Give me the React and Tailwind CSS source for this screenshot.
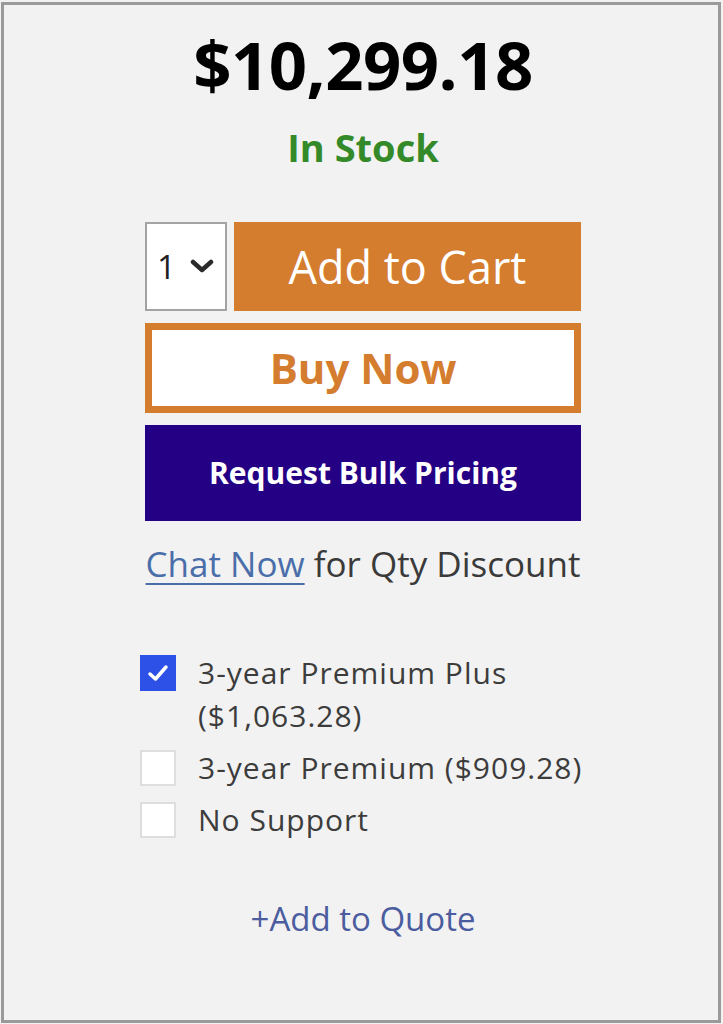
export default function App() {
  const font = { fontFamily: '"Open Sans", "Liberation Sans", sans-serif' };
  return (
    <div className="w-[723px] h-[1024px] bg-[#f2f2f2] pt-[2px] pl-[1px]" style={font}>
      <div className="w-[720px] h-[1021px] border-[3px] border-[#9a9a9a] bg-[#f2f2f2] flex flex-col">
        <div className="w-[436px] ml-[141px] flex flex-col pt-[26px]">
          <div className="text-center text-[67px] leading-[66px] font-bold text-black tracking-[-0.5px]">
            $10,299.18
          </div>
          <div className="mt-[30px] text-center text-[38px] leading-[40px] font-bold text-[#348a29]">
            In Stock
          </div>
          <div className="mt-[55px] flex gap-[7px] h-[89px]">
            <div className="w-[82px] h-full bg-white border-2 border-[#a3a3a3] flex items-center pl-[10px] gap-[14px]">
              <span className="text-[33px] leading-none text-[#222]">1</span>
              <svg width="24" height="15" viewBox="0 0 24 15" fill="none">
                <path d="M3 3 L12 11 L21 3" stroke="#2a2a2a" strokeWidth="4.5" strokeLinecap="round" strokeLinejoin="round" />
              </svg>
            </div>
            <div className="flex-1 h-full bg-[#d57d2f] flex items-center justify-center text-white text-[45px] font-medium leading-none">
              Add to Cart
            </div>
          </div>
          <div className="mt-[12px] h-[90px] border-[7px] border-[#d57d2f] bg-white flex items-center justify-center text-[#d57d2f] text-[42px] font-bold leading-none">
            Buy Now
          </div>
          <div className="mt-[12px] h-[96px] bg-[#240085] flex items-center justify-center text-white text-[30px] font-bold leading-none">
            Request Bulk Pricing
          </div>
          <div className="mt-[23px] text-center text-[35px] leading-[40px] text-[#3a3a3a] whitespace-nowrap">
            <span className="text-[#4a6ea9] underline decoration-2 underline-offset-[6px]">Chat Now</span> for Qty Discount
          </div>
          <div className="mt-[67px] -ml-[5px] w-[470px] flex flex-col gap-[9px]">
            {[
              { label: '3-year Premium Plus ($1,063.28)', checked: true },
              { label: '3-year Premium ($909.28)', checked: false },
              { label: 'No Support', checked: false },
            ].map((o) => (
              <div key={o.label} className="flex items-start gap-[22px]">
                <div
                  className={
                    o.checked
                      ? 'mt-[4px] w-[36px] h-[36px] shrink-0 bg-[#2d50e6] flex items-center justify-center'
                      : 'mt-[4px] w-[36px] h-[36px] shrink-0 bg-white border-2 border-[#dedede]'
                  }
                >
                  {o.checked && (
                    <svg width="22" height="18" viewBox="0 0 22 18" fill="none">
                      <path d="M3 10 L8.5 15 L19 3" stroke="white" strokeWidth="3.5" strokeLinecap="round" strokeLinejoin="round" />
                    </svg>
                  )}
                </div>
                <div className="w-[400px] text-[30px] leading-[43px] tracking-[1px] text-[#3c3c3c]">{o.label}</div>
              </div>
            ))}
          </div>
          <div className="mt-[58px] text-center text-[33px] leading-[40px] text-[#4b5c9f]">+Add to Quote</div>
        </div>
      </div>
    </div>
  );
}
